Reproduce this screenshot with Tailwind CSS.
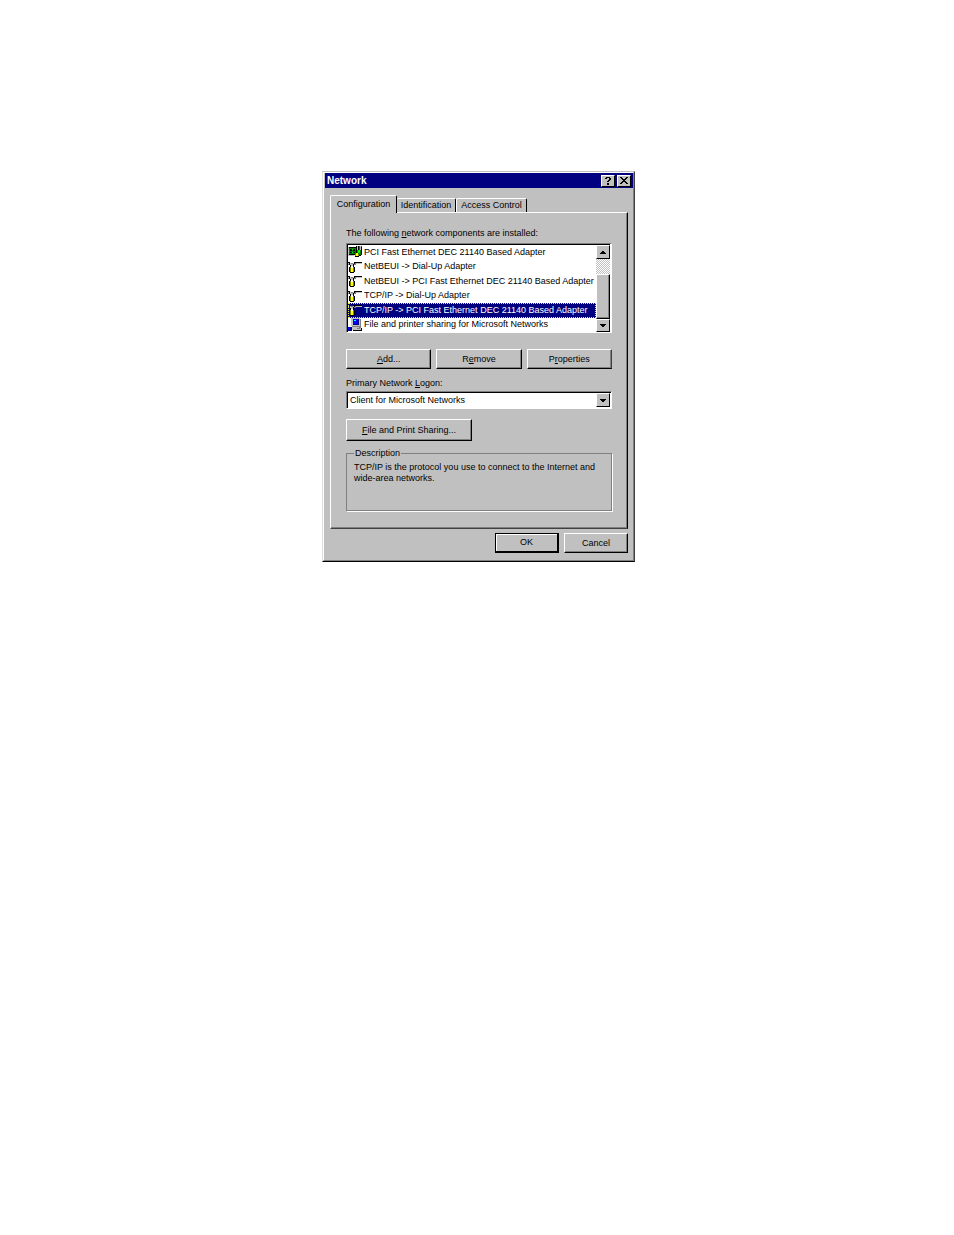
<!DOCTYPE html>
<html lang="en">
<head>
    <meta charset="utf-8"/>
    <meta content="width=device-width, initial-scale=1.0" name="viewport"/>
    <title>Network</title>
    <script src="https://cdn.jsdelivr.net/npm/@tailwindcss/browser@4"></script>
</head>
<body class="bg-white min-h-screen pt-[171px] pl-[3px] font-['Liberation_Sans',sans-serif] text-[9px] leading-[11px] text-black">
    <!-- Icons shared by the list rows -->
    <svg class="hidden">
        <symbol id="icon-adapter" viewBox="0 0 14 14">
            <path fill="#000" d="M0 2h9v8H0z"/>
            <path fill="#008000" d="M1 3h8v6H1z"/>
            <path fill="#000" d="M2 4h2v2H2zM5 4h2v2H5zM2 7h2v1H2zM5 7h2v1H5z"/>
            <path fill="#c0c0c0" d="M0 2h1v9H0zM1 10h5v1H1z"/>
            <path fill="#00ff00" d="M4 4h1v1H4zM4 7h1v1H4z"/>
            <path fill="#008000" d="M8 1h6v9H8z"/>
            <path fill="#000" d="M8 1h1v8H8zM13 2h1v8h-1zM10 1h1v4h-1zM11 10h2v1h-2zM7 11h4v1H7z"/>
            <path fill="#c0c0c0" d="M9 1h1v4H9zM12 1h1v4h-1z"/>
            <path fill="#00ff00" d="M10 5h2v3h-2z"/>
            <path fill="#808000" d="M7 9h4v2H7z"/>
            <path fill="#ffff00" d="M8 8h2v3H8z"/>
        </symbol>
        <symbol id="icon-protocol" viewBox="0 0 14 14">
            <path fill="#000" d="M0 2h2v1H0zM1 3h1v2H1zM6 2h8v1H6zM6 3h1v1H6zM2 5h1v1H2zM5 4h1v2H5z"/>
            <path fill="#c0c0c0" d="M0 3h1v1H0zM7 3h7v1H7zM2 3h1v2H2zM5 3h1v1H5zM3 4h2v2H3z"/>
            <path fill="#808080" d="M0 4h1v1H0zM3 3h2v1H3zM6 4h2v1H6zM7 3h1v1H7z"/>
            <path fill="#000" d="M2 6h4v1H2zM1 7h1v5H1zM6 7h1v5H6zM2 12h4v1H2z"/>
            <path fill="#808000" d="M2 7h4v5H2z"/>
            <path fill="#ffff00" d="M3 8h2v4H3z"/>
            <path fill="#fff" d="M3 6h2v2H3z"/>
        </symbol>
        <symbol id="icon-service" viewBox="0 0 14 14">
            <path fill="#808080" d="M12 1h1v8h-1zM4 8h9v1H4z"/>
            <path fill="#c0c0c0" d="M3 0h9v8H3z"/>
            <path fill="#0000ff" d="M5 1h6v6H5z"/>
            <path fill="#000080" d="M5 6h6v1H5zM10 1h1v6h-1z"/>
            <path fill="#00ffff" d="M6 2h2v1H6z"/>
            <path fill="#808080" d="M3 9h10v1H3z"/>
            <path fill="#c0c0c0" d="M4 9h7v1H4zM4 10h9v2H4z"/>
            <path fill="#000" d="M13 10h1v2h-1zM5 12h9v1H5z"/>
            <path fill="#808080" d="M9 10h3v1H9z"/>
            <path fill="#0000ff" d="M0 9h3v4H0z"/>
            <path fill="#000080" d="M2 9h2v4H2zM0 12h4v1H0z"/>
        </symbol>
    </svg>

    <main class="mx-auto w-full max-w-[313px] bg-[#c0c0c0] border border-t-[#c0c0c0] border-l-[#dfdfdf] border-r-[#404040] border-b-black">
        <div class="border border-t-white border-l-white border-r-[#808080] border-b-[#808080] pl-px pb-[7px]">
            <!-- Title bar -->
            <header class="bg-[#000080] text-white h-[15px] flex items-center px-[2px]">
                <h1 class="flex-1 font-bold text-[10px]">Network</h1>
                <button type="button" aria-label="Help" class="w-[14px] h-[12px] mr-[2px] bg-[#c0c0c0] border border-t-white border-l-white border-r-black border-b-black flex items-center justify-center">
                    <svg class="w-[6px] h-[8px]" viewBox="0 0 6 8" shape-rendering="crispEdges"><path d="M1 0h4v1H1zM0 1h2v1H0zM4 1h2v2H4zM3 3h2v1H3zM2 4h2v1H2zM2 6h2v2H2z"/></svg>
                </button>
                <button type="button" aria-label="Close" class="w-[14px] h-[12px] bg-[#c0c0c0] border border-t-white border-l-white border-r-black border-b-black flex items-center justify-center">
                    <svg class="w-[8px] h-[7px]" viewBox="0 0 8 7" shape-rendering="crispEdges"><path d="M0 0h2v1H0zM6 0h2v1H6zM1 1h2v1H1zM5 1h2v1H5zM2 2h4v1H2zM3 3h2v1H3zM2 4h4v1H2zM1 5h2v1H1zM5 5h2v1H5zM0 6h2v1H0zM6 6h2v1H6z"/></svg>
                </button>
            </header>

            <div class="px-[5px] pt-[7px]">
                <!-- Tabs -->
                <div role="tablist" class="flex items-end">
                    <button type="button" role="tab" aria-selected="true" class="relative z-10 -mb-px w-[67px] h-[18px] pb-px bg-[#c0c0c0] rounded-t-[2px] border border-b-0 border-t-white border-l-white border-r-black">Configuration</button>
                    <button type="button" role="tab" aria-selected="false" class="w-[59px] h-[14px] rounded-t-[2px] border border-b-0 border-l-0 border-t-white border-r-black">Identification</button>
                    <button type="button" role="tab" aria-selected="false" class="w-[71px] h-[14px] rounded-t-[2px] border border-b-0 border-t-white border-l-white border-r-black whitespace-nowrap">Access Control</button>
                </div>

                <!-- Configuration panel -->
                <section role="tabpanel" class="border border-t-white border-l-white border-r-black border-b-[#404040]">
                    <div class="border border-t-0 border-l-0 border-[#808080] pl-[15px] pr-[14px] pt-[15px] pb-[16px]">
                        <p id="components-label">The following <u>n</u>etwork components are installed:</p>
                        <div class="mt-[4px] flex bg-white pr-px border border-t-[#808080] border-l-[#808080] border-r-white border-b-white">
                            <ul role="listbox" aria-labelledby="components-label" class="flex-1 min-w-0 h-[88px] grid grid-rows-6 border-t border-l border-black whitespace-nowrap overflow-hidden">
                                <li role="option" class="flex items-center gap-[2px]"><svg class="w-[14px] h-[14px] shrink-0" shape-rendering="crispEdges"><use href="#icon-adapter"/></svg>PCI Fast Ethernet DEC 21140 Based Adapter</li>
                                <li role="option" class="flex items-center gap-[2px]"><svg class="w-[14px] h-[14px] shrink-0" shape-rendering="crispEdges"><use href="#icon-protocol"/></svg>NetBEUI -&gt; Dial-Up Adapter</li>
                                <li role="option" class="flex items-center gap-[2px]"><svg class="w-[14px] h-[14px] shrink-0" shape-rendering="crispEdges"><use href="#icon-protocol"/></svg>NetBEUI -&gt; PCI Fast Ethernet DEC 21140 Based Adapter</li>
                                <li role="option" class="flex items-center gap-[2px]"><svg class="w-[14px] h-[14px] shrink-0" shape-rendering="crispEdges"><use href="#icon-protocol"/></svg>TCP/IP -&gt; Dial-Up Adapter</li>
                                <li role="option" aria-selected="true" class="flex items-center gap-[2px] bg-[#000080] text-white outline-1 -outline-offset-1 outline-dotted outline-[#ffff00]"><svg class="w-[14px] h-[14px] shrink-0" shape-rendering="crispEdges"><use href="#icon-protocol"/></svg>TCP/IP -&gt; PCI Fast Ethernet DEC 21140 Based Adapter</li>
                                <li role="option" class="flex items-center gap-[2px]"><svg class="w-[14px] h-[14px] shrink-0" shape-rendering="crispEdges"><use href="#icon-service"/></svg>File and printer sharing for Microsoft Networks</li>
                            </ul>
                            <!-- Scroll bar -->
                            <div class="w-[14px] flex flex-col bg-[#dfdfdf] border-t border-t-black">
                                <button type="button" aria-label="Scroll up" class="h-[14px] bg-[#c0c0c0] border border-t-white border-l-white border-r-black border-b-black flex items-center justify-center">
                                    <svg class="w-[6px] h-[3px]" viewBox="0 0 6 3" shape-rendering="crispEdges"><path d="M2 0h2v1H2zM1 1h4v1H1zM0 2h6v1H0z"/></svg>
                                </button>
                                <div class="flex-1 bg-[repeating-conic-gradient(#fff_0_25%,#c0c0c0_0_50%)] bg-size-[2px_2px]"></div>
                                <div class="h-[45px] bg-[#c0c0c0] border border-t-white border-l-white border-r-black border-b-black shadow-[inset_-1px_-1px_#808080]"></div>
                                <button type="button" aria-label="Scroll down" class="h-[13px] bg-[#c0c0c0] border border-t-white border-l-white border-r-black border-b-black flex items-center justify-center">
                                    <svg class="w-[6px] h-[3px]" viewBox="0 0 6 3" shape-rendering="crispEdges"><path d="M0 0h6v1H0zM1 1h4v1H1zM2 2h2v1H2z"/></svg>
                                </button>
                            </div>
                        </div>

                        <div class="mt-[16px] grid grid-cols-3 gap-[5px]">
                            <button type="button" class="h-[20px] border border-t-white border-l-white border-r-black border-b-black shadow-[inset_-1px_-1px_#808080]"><u>A</u>dd...</button>
                            <button type="button" class="h-[20px] border border-t-white border-l-white border-r-black border-b-black shadow-[inset_-1px_-1px_#808080]">R<u>e</u>move</button>
                            <button type="button" class="h-[20px] border border-t-white border-l-white border-r-[#404040] border-b-black shadow-[inset_-1px_-1px_#808080]">P<u>r</u>operties</button>
                        </div>

                        <label for="logon" class="block mt-[9px]">Primary Network <u>L</u>ogon:</label>
                        <div class="relative mt-[2px]">
                            <select id="logon" class="block appearance-none w-full h-[18px] pl-[3px] bg-white border border-t-[#808080] border-l-[#808080] border-r-white border-b-white shadow-[inset_1px_1px_#000]">
                                <option>Client for Microsoft Networks</option>
                            </select>
                            <span class="pointer-events-none absolute top-[2px] right-[2px] bottom-[2px] w-[14px] bg-[#c0c0c0] border border-t-white border-l-white border-r-black border-b-black flex items-center justify-center">
                                <svg class="w-[6px] h-[3px]" viewBox="0 0 6 3" shape-rendering="crispEdges"><path d="M0 0h6v1H0zM1 1h4v1H1zM2 2h2v1H2z"/></svg>
                            </span>
                        </div>

                        <button type="button" class="mt-[10px] block w-[126px] h-[22px] border border-t-white border-l-white border-r-black border-b-black shadow-[inset_-1px_-1px_#808080]"><u>F</u>ile and Print Sharing...</button>

                        <fieldset class="mt-[7px] h-[63px] border border-[#808080] shadow-[1px_1px_#fff] px-[7px] pt-[3px]">
                            <legend class="px-px">Description</legend>
                            <p>TCP/IP is the protocol you use to connect to the Internet and wide-area networks.</p>
                        </fieldset>
                    </div>
                </section>

                <div class="mt-[4px] flex justify-end gap-[5px]">
                    <button type="button" class="w-[64px] h-[20px] border border-black border-r-2 border-b-2 shadow-[inset_1px_1px_#fff]">OK</button>
                    <button type="button" class="w-[64px] h-[20px] border border-t-white border-l-white border-r-black border-b-black shadow-[inset_-1px_-1px_#808080]">Cancel</button>
                </div>
            </div>
        </div>
    </main>
</body>
</html>
